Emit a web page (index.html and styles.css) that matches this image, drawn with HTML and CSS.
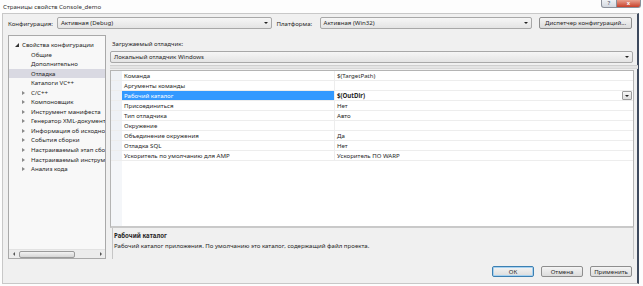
FILE: index.html
```html
<!DOCTYPE html>
<html lang="ru">
<head>
  <meta charset="UTF-8">
  <title>Страницы свойств Console_demo</title>
  <link rel="stylesheet" href="styles.css">
</head>
<body>
  <div class="window">
    <div class="titlebar">
      <span class="title">Страницы свойств Console_demo</span>
      <div class="caption-buttons">
        <div class="cap-btn help">?</div>
        <div class="cap-btn close">x</div>
      </div>
    </div>

    <div class="client">
      <div class="config-row">
        <span class="label">Конфигурация:</span>
        <div class="combo combo-config">Активная (Debug)<span class="arrow"></span></div>
        <span class="label label-platform">Платформа:</span>
        <div class="combo combo-platform">Активная (Win32)<span class="arrow"></span></div>
        <div class="button btn-manager">Диспетчер конфигураций...</div>
      </div>

      <div class="main">
        <div class="tree">
          <div class="tree-items">
            <div class="tree-item root"><span class="expander open"></span>Свойства конфигурации</div>
            <div class="tree-item child">Общие</div>
            <div class="tree-item child">Дополнительно</div>
            <div class="tree-item child selected">Отладка</div>
            <div class="tree-item child">Каталоги VC++</div>
            <div class="tree-item child"><span class="expander closed"></span>C/C++</div>
            <div class="tree-item child"><span class="expander closed"></span>Компоновщик</div>
            <div class="tree-item child"><span class="expander closed"></span>Инструмент манифеста</div>
            <div class="tree-item child"><span class="expander closed"></span>Генератор XML-документ</div>
            <div class="tree-item child"><span class="expander closed"></span>Информация об исходно</div>
            <div class="tree-item child"><span class="expander closed"></span>События сборки</div>
            <div class="tree-item child"><span class="expander closed"></span>Настраиваемый этап сбо</div>
            <div class="tree-item child"><span class="expander closed"></span>Настраиваемый инструм</div>
            <div class="tree-item child"><span class="expander closed"></span>Анализ кода</div>
          </div>
          <div class="hscroll">
            <span class="sc-arrow left"></span>
            <div class="sc-track"><div class="sc-thumb"></div></div>
            <span class="sc-arrow right"></span>
          </div>
        </div>

        <div class="panel">
          <div class="panel-label">Загружаемый отладчик:</div>
          <div class="combo combo-debugger">Локальный отладчик Windows<span class="arrow"></span></div>
          <div class="splitter"></div>

          <div class="grid">
            <div class="row"><div class="margin"></div><div class="name">Команда</div><div class="value">$(TargetPath)</div></div>
            <div class="row"><div class="margin"></div><div class="name">Аргументы команды</div><div class="value"></div></div>
            <div class="row active"><div class="margin"></div><div class="name">Рабочий каталог</div><div class="value">$(OutDir)<span class="drop"></span></div></div>
            <div class="row"><div class="margin"></div><div class="name">Присоединиться</div><div class="value">Нет</div></div>
            <div class="row"><div class="margin"></div><div class="name">Тип отладчика</div><div class="value">Авто</div></div>
            <div class="row"><div class="margin"></div><div class="name">Окружение</div><div class="value"></div></div>
            <div class="row"><div class="margin"></div><div class="name">Объединение окружения</div><div class="value">Да</div></div>
            <div class="row"><div class="margin"></div><div class="name">Отладка SQL</div><div class="value">Нет</div></div>
            <div class="row"><div class="margin"></div><div class="name">Ускоритель по умолчанию для AMP</div><div class="value">Ускоритель ПО WARP</div></div>
            <div class="grid-fill"><div class="margin"></div></div>
          </div>

          <div class="description">
            <div class="desc-title">Рабочий каталог</div>
            <div class="desc-text">Рабочий каталог приложения. По умолчанию это каталог, содержащий файл проекта.</div>
          </div>
        </div>
      </div>

      <div class="footer">
        <div class="button btn-default">ОК</div>
        <div class="button">Отмена</div>
        <div class="button">Применить</div>
      </div>
    </div>
  </div>
</body>
</html>
```

FILE: styles.css
```css
* {
  margin: 0;
  padding: 0;
  box-sizing: border-box;
}

body {
  font-family: 'Noto Sans', 'Open Sans', sans-serif;
  font-size: 6.1px;
  color: #262626;
  background: #fff;
  width: 643px;
  height: 286px;
  overflow: hidden;
}

.window {
  width: 643px;
  height: 286px;
  background: #fdfdfd;
}

/* title bar */
.titlebar {
  height: 13px;
  display: flex;
  align-items: flex-start;
  padding-left: 3px;
}

.title {
  line-height: 13px;
  color: #333;
}

.caption-buttons {
  margin-left: auto;
  margin-right: 2px;
  display: flex;
}

.cap-btn {
  height: 8px;
  line-height: 7px;
  text-align: center;
  font-size: 6px;
  font-weight: 600;
  border: 1px solid #8a8f99;
  border-top: none;
}

.cap-btn.help {
  width: 16px;
  background: linear-gradient(#eef1f5, #d4d9e0);
  color: #6a7080;
  border-radius: 0 0 0 3px;
}

.cap-btn.close {
  width: 24px;
  background: linear-gradient(#e8a08e, #c8402a);
  color: #fff;
  border-left: none;
  border-radius: 0 0 3px 0;
}

/* dialog body */
.client {
  margin-left: 2px;
  width: 637px;
  height: 271px;
  background: #f0f0f0;
  border: 1px solid #c8c8c8;
  border-right: 2px solid #3e4a5e;
  padding: 3px 5px 0 5px;
}

.config-row {
  display: flex;
  align-items: center;
  height: 12px;
}

.label {
  width: 49px;
}

.label-platform {
  width: 43px;
  margin-left: 5px;
}

.combo {
  position: relative;
  height: 12px;
  line-height: 10px;
  padding-left: 3px;
  border: 1px solid #a8a8a8;
  border-radius: 2px;
  background: linear-gradient(#f6f6f6, #e4e4e4);
  white-space: nowrap;
}

.combo .arrow {
  position: absolute;
  right: 3px;
  top: 4px;
  border-left: 2px solid transparent;
  border-right: 2px solid transparent;
  border-top: 2.5px solid #222;
}

.combo-config {
  width: 215px;
}

.combo-platform {
  width: 213px;
}

.button {
  height: 11px;
  line-height: 9px;
  text-align: center;
  border: 1px solid #8e8e8e;
  border-radius: 2px;
  background: linear-gradient(#f4f4f4, #dcdcdc);
  width: 42px;
  white-space: nowrap;
}

.btn-manager {
  width: 93px;
  height: 12px;
  line-height: 10px;
  margin-left: 7px;
}

/* main area */
.main {
  display: flex;
  gap: 4px;
  margin-top: 6px;
  height: 224px;
}

.tree {
  width: 98px;
  display: flex;
  flex-direction: column;
  background: #f8f8f8;
  border: 1px solid #a9a9a9;
}

.tree-items {
  flex: 1;
  padding-top: 4px;
  overflow: hidden;
}

.tree-item {
  height: 9.55px;
  line-height: 9.55px;
  white-space: nowrap;
  padding-left: 22px;
  position: relative;
}

.tree-item.root {
  padding-left: 13px;
}

.tree-item.selected {
  background: #d9d9e2;
}

.expander {
  position: absolute;
  top: 3px;
}

.root .expander.open {
  left: 6px;
  border-left: 4px solid transparent;
  border-bottom: 4px solid #333;
}

.expander.closed {
  left: 13px;
  top: 3px;
  border-top: 2px solid transparent;
  border-bottom: 2px solid transparent;
  border-left: 3px solid #8a8a8a;
}

.hscroll {
  height: 9px;
  display: flex;
  align-items: center;
  background: #ececec;
  border-top: 1px solid #e2e2e2;
}

.sc-arrow {
  width: 9px;
  display: flex;
  justify-content: center;
}

.sc-arrow.left::before {
  content: '';
  border-top: 2px solid transparent;
  border-bottom: 2px solid transparent;
  border-right: 2px solid #555;
}

.sc-arrow.right::before {
  content: '';
  border-top: 2px solid transparent;
  border-bottom: 2px solid transparent;
  border-left: 2px solid #555;
}

.sc-track {
  flex: 1;
  height: 7px;
}

.sc-thumb {
  width: 56px;
  height: 7px;
  margin-left: 1px;
  border: 1px solid #9a9a9a;
  border-radius: 2px;
  background: linear-gradient(#f2f2f2, #d6d6d6);
}

/* right panel */
.panel {
  flex: 1;
  display: flex;
  flex-direction: column;
}

.panel-label {
  padding-top: 5px;
  height: 16px;
  line-height: 8px;
  padding-left: 2px;
}

.combo-debugger {
  width: 523px;
}

.splitter {
  height: 4px;
  margin-top: 2px;
  margin-bottom: 1px;
  border-top: 1px solid #cfcfcf;
  border-bottom: 1px solid #d8d8d8;
  background: #e4e4e4;
  margin-right: -4px;
}

.grid {
  height: 158px;
  display: flex;
  flex-direction: column;
  background: #fff;
  border: 1px solid #b4b4b4;
  border-bottom: 2px solid #c9c9c9;
  width: 524px;
}

.row {
  height: 10px;
  display: flex;
  border-bottom: 1px solid #ededed;
  line-height: 9px;
  white-space: nowrap;
}

.margin {
  width: 11px;
  background: #eef1f6;
  flex-shrink: 0;
}

.name {
  width: 213px;
  padding-left: 2px;
  border-right: 1px solid #ededed;
}

.value {
  flex: 1;
  padding-left: 2px;
  position: relative;
}

.row.active .name {
  background: #3399ff;
  color: #fff;
}

.row.active .value {
  font-weight: 700;
}

.drop {
  position: absolute;
  right: 1px;
  top: 0;
  width: 10px;
  height: 9px;
  border: 1px solid #9c9c9c;
  border-radius: 1px;
  background: linear-gradient(#f6f6f6, #dedede);
}

.drop::after {
  content: '';
  position: absolute;
  left: 2px;
  top: 3px;
  border-left: 2px solid transparent;
  border-right: 2px solid transparent;
  border-top: 2.5px solid #222;
}

.grid-fill {
  flex: 1;
  display: flex;
}

.grid-fill .margin {
  background: #f4f6f9;
}

.description {
  flex: 1;
  margin-left: 2px;
  width: 522px;
  border-left: 1px solid #c6c6c6;
  border-right: 1px solid #c6c6c6;
  padding: 3px 0 0 1px;
  line-height: 10px;
}

.desc-title {
  font-weight: 700;
}

/* footer */
.footer {
  display: flex;
  justify-content: flex-end;
  gap: 7px;
  margin-top: 7px;
}

.btn-default {
  border-color: #3c7fb1;
  box-shadow: inset 0 0 0 1px #a6d1f0;
}
```
